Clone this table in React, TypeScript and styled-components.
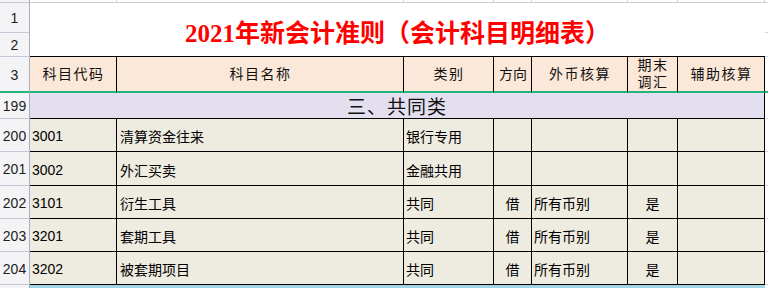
import React from "react";
import styled, { createGlobalStyle } from "styled-components";

const Global = createGlobalStyle`
  html, body { margin: 0; padding: 0; background: #ffffff; }
  body { font-family: "Noto Sans CJK SC", "Liberation Sans", sans-serif; }
`;

const CJK = `"Liberation Sans", "Noto Sans CJK SC", sans-serif`;

const Sheet = styled.div`
  display: grid;
  width: 768px;
  height: 288px;
  overflow: hidden;
  grid-template-columns: 30px 87px 287px 90px 38px 96px 50px 87px 1fr;
  grid-template-rows: 3px 30px 24px 36px 26px 33px 34px 33px 33px 33px 1fr;
  background: #ffffff;
`;

const RowHead = styled.div<{ $green?: boolean; $row?: string }>`
  box-sizing: border-box;
  grid-column: 1;
  ${(p) => (p.$row ? `grid-row: ${p.$row};` : "")}
  background: #f4f4f6;
  border-right: 1px solid #a7afc2;
  border-bottom: ${(p) => (p.$green ? "2px solid #24b57a" : "1px solid #c3c9d6")};
  display: flex;
  align-items: center;
  justify-content: center;
  font-family: ${CJK};
  font-size: 14px;
  color: #1c1c1c;
  padding-top: 1px;
`;

const GridStub = styled.div`
  box-sizing: border-box;
  background: #ffffff;
  border-right: 1px solid #d4d4d4;
  border-bottom: 1px solid #c8ccd6;
`;

const TitleCell = styled.div`
  box-sizing: border-box;
  grid-column: 2 / 9;
  grid-row: 2 / 4;
  background: #ffffff;
  border-bottom: 1px solid #000000;
  display: flex;
  align-items: center;
  justify-content: center;
  font-family: "Liberation Serif", "Noto Sans CJK SC", serif;
  font-weight: bold;
  font-size: 25px;
  color: #ff0000;
  padding-top: 3px;
`;

const EdgeCell = styled.div<{ $green?: boolean; $blank?: boolean }>`
  box-sizing: border-box;
  background: #ffffff;
  border-bottom: ${(p) =>
    p.$green ? "2px solid #24b57a" : p.$blank ? "none" : "1px solid #d0d4dc"};
`;

const HeadCell = styled.div`
  box-sizing: border-box;
  background: #fce8d8;
  border-right: 1px solid #000000;
  border-bottom: 2px solid #24b57a;
  display: flex;
  align-items: center;
  justify-content: center;
  text-align: center;
  font-family: ${CJK};
  font-size: 14px;
  letter-spacing: 1.5px;
  line-height: 17px;
  color: #111111;
  padding-left: 1px;
`;

const SectionCell = styled.div`
  box-sizing: border-box;
  grid-column: 2 / 9;
  background: #e3dfee;
  border-right: 1px solid #000000;
  border-bottom: 1px solid #000000;
  display: flex;
  align-items: center;
  justify-content: center;
  font-family: ${CJK};
  font-size: 19px;
  letter-spacing: 1px;
  color: #111111;
`;

const Cell = styled.div<{ $align?: "left" | "center" }>`
  box-sizing: border-box;
  background: #eeebe0;
  border-right: 1px solid #000000;
  border-bottom: 1px solid #000000;
  display: flex;
  align-items: center;
  justify-content: ${(p) => (p.$align === "center" ? "center" : "flex-start")};
  padding-left: ${(p) => (p.$align === "center" ? "0" : "2px")};
  padding-top: 2px;
  font-family: ${CJK};
  font-size: 14px;
  color: #000000;
  white-space: nowrap;
`;

const BottomBand = styled.div`
  grid-column: 2 / 9;
  background: #a3d4e3;
`;

const BottomHead = styled.div`
  grid-column: 1;
  background: #f4f4f6;
  border-right: 1px solid #a7afc2;
`;

type Row = {
  n: number;
  code: string;
  name: string;
  kind: string;
  dir: string;
  fx: string;
  adj: string;
};

const rows: Row[] = [
  { n: 200, code: "3001", name: "清算资金往来", kind: "银行专用", dir: "", fx: "", adj: "" },
  { n: 201, code: "3002", name: "外汇买卖", kind: "金融共用", dir: "", fx: "", adj: "" },
  { n: 202, code: "3101", name: "衍生工具", kind: "共同", dir: "借", fx: "所有币别", adj: "是" },
  { n: 203, code: "3201", name: "套期工具", kind: "共同", dir: "借", fx: "所有币别", adj: "是" },
  { n: 204, code: "3202", name: "被套期项目", kind: "共同", dir: "借", fx: "所有币别", adj: "是" },
];

export default function App() {
  return (
    <>
      <Global />
      <Sheet>
        <RowHead />
        {Array.from({ length: 7 }).map((_, i) => (
          <GridStub key={i} />
        ))}
        <EdgeCell />

        <RowHead $row="2">1</RowHead>
        <TitleCell>2021年新会计准则（会计科目明细表）</TitleCell>
        <EdgeCell style={{ gridColumn: 9, gridRow: 2 }} />
        <RowHead $row="3">2</RowHead>
        <EdgeCell style={{ gridColumn: 9, gridRow: 3 }} />

        <RowHead $green>3</RowHead>
        <HeadCell>科目代码</HeadCell>
        <HeadCell>科目名称</HeadCell>
        <HeadCell>类别</HeadCell>
        <HeadCell style={{ letterSpacing: 0 }}>方向</HeadCell>
        <HeadCell>外币核算</HeadCell>
        <HeadCell>
          期末
          <br />
          调汇
        </HeadCell>
        <HeadCell>辅助核算</HeadCell>
        <EdgeCell $green />

        <RowHead>199</RowHead>
        <SectionCell>三、共同类</SectionCell>
        <EdgeCell />

        {rows.map((r) => (
          <React.Fragment key={r.n}>
            <RowHead>{r.n}</RowHead>
            <Cell>{r.code}</Cell>
            <Cell style={{ paddingLeft: 3 }}>{r.name}</Cell>
            <Cell>{r.kind}</Cell>
            <Cell $align="center">{r.dir}</Cell>
            <Cell>{r.fx}</Cell>
            <Cell $align="center">{r.adj}</Cell>
            <Cell />
            <EdgeCell />
          </React.Fragment>
        ))}

        <BottomHead />
        <BottomBand />
        <EdgeCell $blank />
      </Sheet>
    </>
  );
}
